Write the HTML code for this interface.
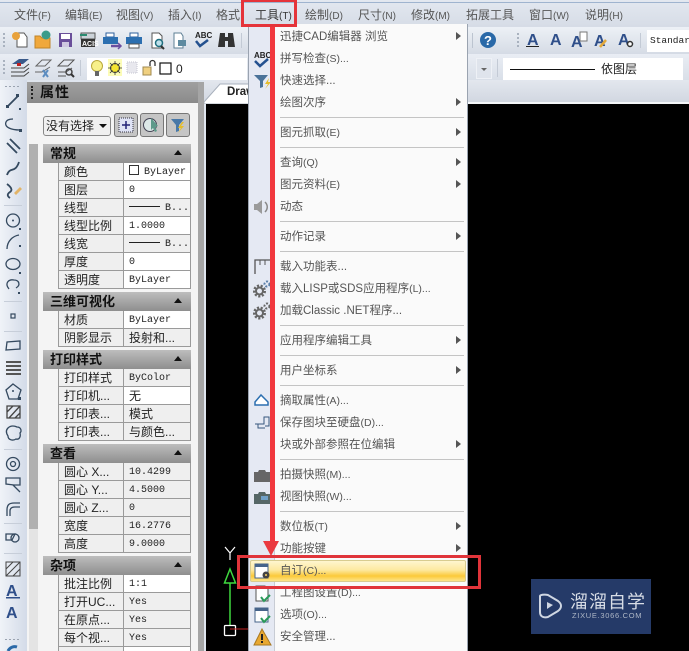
<!DOCTYPE html>
<html><head><meta charset="utf-8">
<style>
html,body{margin:0;padding:0;width:689px;height:651px;overflow:hidden;background:#dfe5ee}
body{position:relative;font-family:"Liberation Sans","Noto Sans CJK SC",sans-serif;font-size:12px;color:#222}
div{position:absolute;box-sizing:border-box;white-space:nowrap}
.m{top:7px;height:16px;line-height:16px;font-size:12px;color:#555}
.m small{font-size:10px}
.i{left:280px;height:16px;line-height:16px;font-size:11.5px;color:#555;margin-top:1px}
.i small{font-size:10.5px}
.s{left:280px;width:184px;height:1px;background:#c4c4c4}
.a{left:456px;width:0;height:0;border-left:5px solid #555;border-top:4.5px solid transparent;border-bottom:4.5px solid transparent}
.h{left:43px;width:148px;height:19px;background:linear-gradient(#bdbdbd,#8e8e8e);font-weight:bold;font-size:13px;line-height:19px;padding-left:7px;color:#111}
.h:after{content:"";position:absolute;right:9px;top:6px;border-bottom:5px solid #111;border-left:4.5px solid transparent;border-right:4.5px solid transparent}
.l,.v{height:18px;line-height:19px;border-bottom:1px solid #9a9a9a;overflow:hidden}
.l{left:58px;width:66px;background:#efefef;border-left:1px solid #9a9a9a;border-right:1px solid #9a9a9a;padding-left:5px;font-size:12px;color:#222}
.v{left:124px;width:67px;background:#fff;border-right:1px solid #9a9a9a;padding-left:5px;font:10px/19px "Liberation Mono","Noto Sans CJK SC",monospace;color:#222}
.g{background:#efefef}
.c{font-family:"Liberation Sans","Noto Sans CJK SC",sans-serif;font-size:12px}
.ln{display:inline-block;width:31px;height:1px;background:#222;vertical-align:3px;margin-right:5px}
</style></head><body>

<!-- menu bar -->
<div style="left:0;top:0;width:689px;height:27px;background:linear-gradient(#e3e8f0,#d6dce6)"></div>
<div style="left:0;top:2px;width:689px;height:1px;background:#9fb4cf"></div>
<div class="m" style="left:14px">文件<small>(F)</small></div>
<div class="m" style="left:65px">编辑<small>(E)</small></div>
<div class="m" style="left:116px">视图<small>(V)</small></div>
<div class="m" style="left:168px">插入<small>(I)</small></div>
<div class="m" style="left:216px">格式</div>
<div class="m" style="left:255px;color:#333">工具<small>(T)</small></div>
<div class="m" style="left:305px">绘制<small>(D)</small></div>
<div class="m" style="left:358px">尺寸<small>(N)</small></div>
<div class="m" style="left:411px">修改<small>(M)</small></div>
<div class="m" style="left:466px">拓展工具</div>
<div class="m" style="left:529px">窗口<small>(W)</small></div>
<div class="m" style="left:585px">说明<small>(H)</small></div>

<!-- toolbars -->
<div style="left:0;top:27px;width:689px;height:27px;background:linear-gradient(#edf1f6,#d5dbe5)"></div>
<div style="left:0;top:54px;width:689px;height:26px;background:linear-gradient(#e9edf4,#d9dfe8)"></div>
<div style="left:87px;top:58px;width:160px;height:22px;background:#fff"></div>
<div style="left:503px;top:58px;width:180px;height:22px;background:#fff"></div>
<div style="left:510px;top:69px;width:85px;height:1px;background:#111"></div>
<div style="left:601px;top:60px;height:18px;line-height:18px;font-size:12px;color:#222">依图层</div>
<div style="left:476px;top:58px;width:16px;height:21px;background:#dfe4ec;border:1px solid #eef1f6"></div>
<div style="left:481px;top:68px;border-top:3px solid #666;border-left:3px solid transparent;border-right:3px solid transparent"></div>
<div style="left:647px;top:30px;width:42px;height:22px;background:#fff;font:9.5px/22px 'Liberation Mono',monospace;padding-left:3px;color:#222;overflow:hidden">Standard</div>
<div style="left:176px;top:60px;height:18px;line-height:18px;font-size:12px;color:#222">0</div>

<svg style="position:absolute;left:0;top:0" width="689" height="104" viewBox="0 0 689 104">
 <g fill="#a9b2bf">
  <rect x="3" y="33" width="2" height="2"/><rect x="3" y="37" width="2" height="2"/><rect x="3" y="41" width="2" height="2"/><rect x="3" y="45" width="2" height="2"/>
  <rect x="3" y="60" width="2" height="2"/><rect x="3" y="64" width="2" height="2"/><rect x="3" y="68" width="2" height="2"/><rect x="3" y="72" width="2" height="2"/>
  <rect x="517" y="33" width="2" height="2"/><rect x="517" y="37" width="2" height="2"/><rect x="517" y="41" width="2" height="2"/><rect x="517" y="45" width="2" height="2"/>
 </g>
 <!-- new -->
 <path d="M17 33h7l3 4v10H17z" fill="#fff" stroke="#555"/><circle cx="16" cy="36" r="4" fill="#e8a23c"/>
 <!-- open -->
 <path d="M35 36h5l2 2h8v10H35z" fill="#f0a83c" stroke="#c08428"/><circle cx="46" cy="35" r="4.500" fill="#3b9c8a"/>
 <!-- save -->
 <path d="M59 33h13v14H59z" fill="#6a4f9a"/><rect x="61" y="34" width="9" height="5" fill="#fff"/><rect x="62" y="42" width="7" height="5" fill="#cfc8e0"/>
 <!-- acis -->
 <rect x="81" y="33" width="14" height="6" fill="#cbd2d8" stroke="#555"/><rect x="81" y="39" width="14" height="8" fill="#333"/><path d="M80 35h7" stroke="#2a8a70" stroke-width="2"/>
 <text x="82" y="46" font-family="Liberation Sans" font-size="7" font-weight="bold" fill="#fff">ACIS</text>
 <!-- print preview -->
 <rect x="106" y="33" width="8" height="4" fill="#fff" stroke="#2c5f9c"/><rect x="103" y="37" width="15" height="7" fill="#2c6fb0"/><path d="M111 46h9" stroke="#6a4fa0" stroke-width="2.500"/><path d="M118 43l3 3-3 3" fill="none" stroke="#6a4fa0" stroke-width="1.500"/>
 <!-- print -->
 <rect x="130" y="33" width="8" height="4" fill="#fff" stroke="#2c5f9c"/><rect x="126" y="37" width="16" height="7" fill="#2c6fb0"/><rect x="129" y="44" width="10" height="4" fill="#fff" stroke="#555"/>
 <!-- preview doc -->
 <path d="M152 33h7l3 3v12h-10z" fill="#fff" stroke="#555"/><circle cx="159" cy="43" r="3.500" fill="#bfe0ea" stroke="#1f6f80" stroke-width="1.500"/><path d="M161 46l3 3" stroke="#333" stroke-width="2"/>
 <!-- page setup -->
 <path d="M174 33h7l2 3v12h-9z" fill="#fff" stroke="#5e7f94"/><rect x="178" y="40" width="8" height="6" fill="#5e8aa0"/>
 <!-- ABC -->
 <text x="195" y="38" font-family="Liberation Sans" font-size="8" font-weight="bold" fill="#222">ABC</text>
 <path d="M196 41l4 5 8-6" fill="none" stroke="#24518f" stroke-width="2.500"/>
 <!-- binoculars -->
 <path d="M220 33h5v4h3v-4h5l2 14h-7v-6h-3v6h-7z" fill="#333"/>
 <rect x="241" y="33" width="1" height="15" fill="#c3cad5"/>
 <rect x="472" y="33" width="1" height="15" fill="#bcc4d0"/>
 <!-- help -->
 <circle cx="488" cy="40" r="8" fill="#2a69a8"/>
 <text x="484" y="45" font-family="Liberation Sans" font-size="13" font-weight="bold" fill="#fff">?</text>
 <!-- text styles -->
 <g font-family="Liberation Sans" font-weight="bold" font-size="16" fill="#2f4f8a">
  <text x="527" y="45">A</text><rect x="526" y="46" width="13" height="1" fill="#222"/>
  <text x="550" y="45">A</text><text x="571" y="47">A</text><text x="594" y="46">A</text><text x="618" y="45">A</text>
 </g>
 <path d="M580 32h7v9h-7z" fill="#fff" stroke="#777"/>
 <path d="M600 47l6-7" stroke="#e2a83a" stroke-width="2.500"/>
 <circle cx="630" cy="44" r="2.500" fill="#fff" stroke="#333" stroke-width="1.500"/>
 <rect x="640" y="33" width="1" height="15" fill="#c3cad5"/>
 <rect x="497" y="59" width="1" height="18" fill="#c3cad5"/>
 <!-- layer tools -->
 <path d="M12 64l7-5h10l-6 5z" fill="#3a5a8a"/><path d="M11 68h13l5-4M11 72h13l5-4M11 76h13l5-4" fill="none" stroke="#444"/><rect x="17" y="63" width="4" height="3" fill="#c02020"/>
 <path d="M36 66l6-6h9l-6 6zM35 72h7l8-5" fill="none" stroke="#666"/><path d="M43 70l5 7M48 70l-5 7" stroke="#5c8dc0" stroke-width="2"/>
 <path d="M58 66l6-6h10l-6 6zM58 72h8l6-4M58 76h8" fill="none" stroke="#555"/><circle cx="69" cy="72" r="3" fill="none" stroke="#444" stroke-width="1.500"/><path d="M71 74l3 3" stroke="#333" stroke-width="2"/>
 <rect x="80" y="60" width="1" height="16" fill="#c3cad5"/>
 <!-- bulb etc -->
 <circle cx="97" cy="66" r="5.500" fill="#f7f08a" stroke="#b9a83a"/><rect x="95" y="71" width="4" height="5" fill="#666"/>
 <rect x="108" y="59" width="14" height="17" fill="#fbfb9a" opacity=".7"/><circle cx="115" cy="68" r="4.500" fill="#f5e530" stroke="#333"/>
 <path d="M115 61v14M108 68h14M110 63l10 10M120 63l-10 10" stroke="#333" stroke-width=".8"/><circle cx="115" cy="68" r="3.500" fill="#f5e530"/>
 <rect x="127" y="62" width="10" height="11" fill="#e8e8ee" stroke="#c6c6d2" stroke-dasharray="1 1"/>
 <rect x="143" y="67" width="8" height="8" fill="#f0d080" stroke="#a08a50"/><path d="M150 66v-3a2.500 2.500 0 0 1 5 0v3" fill="none" stroke="#333" stroke-width="1.300"/>
 <rect x="160" y="63" width="11" height="11" fill="#fff" stroke="#111" stroke-width="1.200"/>
</svg>

<!-- left toolbar -->
<div style="left:0;top:80px;width:27px;height:571px;background:linear-gradient(90deg,#f0f3f8,#d3dbe8)"></div>
<svg style="position:absolute;left:0;top:80px" width="28" height="571" viewBox="0 80 28 571">
 <g fill="#9aa3b0"><rect x="5" y="86" width="2" height="1"/><rect x="9" y="86" width="2" height="1"/><rect x="13" y="86" width="2" height="1"/><rect x="17" y="86" width="2" height="1"/><rect x="5" y="639" width="2" height="1"/><rect x="9" y="639" width="2" height="1"/><rect x="13" y="639" width="2" height="1"/><rect x="17" y="639" width="2" height="1"/></g>
 <g fill="none" stroke="#34495f" stroke-width="1.300">
  <path d="M7 107L18 96" stroke-width="1.800"/>
  <path d="M13 119c-9 0-9 7-4 9 2 1 6 2 11 2"/>
  <path d="M7 143l10 10M10 139l10 10" stroke-width="1.800"/>
  <path d="M7 175c3-9 8-1 12-13" stroke-width="1.800"/>
  <path d="M7 184c4 3 6 6 3 8s-3 4 0 6" stroke-width="1.800"/>
  <circle cx="13" cy="220.500" r="6.500"/>
  <path d="M7 249c0-8 6-13 12-14"/>
  <ellipse cx="13" cy="264" rx="7" ry="5.500"/>
  <path d="M9 289c-5-6 0-10 5-9 5 0 7 5 2 8"/>
  <rect x="11" y="314" width="4" height="4" stroke-width="1.200"/>
  <path d="M6 350l14-1v-8l-13 1z"/>
  <path d="M6 362h15M6 366h15M6 370h15M6 374h15" stroke="#555" stroke-width="2"/>
  <path d="M13 384l8 6-3 9H9l-3-9z"/>
  <path d="M7 418v-12h13v12zM7 412l6-6M9 418l11-12M15 418l5-5" stroke="#444"/>
  <path d="M8 428c3-3 7-2 9-1 4 0 5 4 3 6 1 4-1 7-4 6-3 2-8 1-8-3-2-3-2-6 0-8z"/>
  <circle cx="13" cy="464" r="6.500"/><circle cx="13" cy="464" r="2.500"/>
  <path d="M6 478h14v7h-6l-8-1zM13 485l7 7"/>
  <path d="M7 516v-6c0-5 2-7 7-7h6M10 516v-5c0-3 2-4 5-4h5" stroke-width="1.300"/>
  <path d="M6 534h9l-3 6H6z"/><circle cx="15" cy="538" r="4"/>
 </g>
 <g fill="#34495f">
  <rect x="6" y="105" width="3" height="3"/><rect x="16" y="94" width="3" height="3"/><rect x="19" y="108" width="2" height="2"/>
  <rect x="19" y="129" width="3" height="3"/><rect x="19" y="245" width="2" height="2"/><rect x="19" y="272" width="2" height="2"/><rect x="18" y="292" width="2" height="2"/><rect x="19" y="228" width="2" height="2"/><rect x="18" y="397" width="3" height="3"/>
 </g>
 <path d="M14 193l6-6 2 2-6 6z" fill="#e2b468"/>
 <circle cx="13" cy="391" r="1" fill="#34495f"/>
 <circle cx="13" cy="220.500" r="1" fill="#34495f"/>
 <g fill="#c7ced9">
  <rect x="4" y="205" width="18" height="1"/><rect x="4" y="301" width="18" height="1"/><rect x="4" y="331" width="18" height="1"/><rect x="4" y="449" width="18" height="1"/><rect x="4" y="523" width="18" height="1"/><rect x="4" y="553" width="18" height="1"/>
 </g>
 <g font-family="Liberation Sans" font-weight="bold" font-size="16" fill="#2f4f8a">
  <text x="6" y="596">A</text><text x="6" y="618">A</text>
 </g>
 <rect x="6" y="597" width="14" height="1.500" fill="#2f4f8a"/>
 <path d="M6 576v-14h14v14zM6 569l7-7M6 576l14-14M13 576l7-7" fill="none" stroke="#444"/>
 <path d="M8 651c2-4 6-5 9-4" fill="none" stroke="#2a69a8" stroke-width="3"/>
</svg>

<!-- property panel -->
<div style="left:27px;top:82px;width:177px;height:569px;background:#f4f4f4"></div>
<div style="left:27px;top:82px;width:171px;height:21px;background:linear-gradient(#a0a0a0,#8a8a8a);"></div>
<div style="left:198px;top:82px;width:6px;height:569px;background:#a5a5a5"></div>
<div style="left:31px;top:86px;width:2px;height:13px;border-left:2px dotted #222"></div>
<div style="left:40px;top:82px;height:21px;line-height:21px;font-size:14px;font-weight:bold;color:#111;letter-spacing:1px">属性</div>
<div style="left:29px;top:144px;width:9px;height:507px;background:#e4e4e4"></div>
<div style="left:29px;top:144px;width:9px;height:385px;background:#b0b0b0"></div>
<div style="left:43px;top:116px;width:68px;height:20px;border:1px solid #888;border-radius:3px;background:#f0f0f0;line-height:18px;padding-left:2px;font-size:12px;color:#222;overflow:hidden">没有选择</div>
<div style="left:96px;top:117px;width:14px;height:18px;background:#f0f0f0;border-radius:0 3px 3px 0"></div>
<div style="left:99px;top:124px;border-top:4px solid #111;border-left:4px solid transparent;border-right:4px solid transparent"></div>
<div style="left:114px;top:113px;width:24px;height:24px;background:#c5c5c5;border:1px solid #777;border-radius:3px"></div>
<div style="left:140px;top:113px;width:24px;height:24px;background:#c5c5c5;border:1px solid #777;border-radius:3px"></div>
<div style="left:166px;top:113px;width:24px;height:24px;background:#c5c5c5;border:1px solid #777;border-radius:3px"></div>
<svg style="position:absolute;left:114px;top:113px" width="76" height="24" viewBox="0 0 76 24">
 <rect x="5" y="5" width="14" height="14" fill="#dfe3f5" stroke="#334" stroke-dasharray="1 1"/><path d="M12 8v8M8 12h8" stroke="#227" stroke-width="1.500"/>
 <circle cx="36" cy="12" r="6.500" fill="#dce8e8" stroke="#445" /><path d="M37 5l7 8-3 1 2 4-2 1-2-4-2 2z" fill="#5d9a8a"/>
 <path d="M57 6h13l-5 6v6l-3 1v-7z" fill="#4878a8"/><path d="M68 9l-4 6h3l-3 5 6-7h-3l3-4z" fill="#e6bd2a"/>
</svg>

<div class="h" style="top:144px">常规</div>
<div class="l" style="top:163px">颜色</div><div class="v" style="top:163px"><span style="display:inline-block;width:10px;height:10px;border:1px solid #333;box-sizing:border-box;vertical-align:-1px;margin-right:5px"></span>ByLayer</div>
<div class="l" style="top:181px">图层</div><div class="v" style="top:181px">0</div>
<div class="l" style="top:199px">线型</div><div class="v g" style="top:199px"><span class="ln"></span>B...</div>
<div class="l" style="top:217px">线型比例</div><div class="v" style="top:217px">1.0000</div>
<div class="l" style="top:235px">线宽</div><div class="v g" style="top:235px"><span class="ln"></span>B...</div>
<div class="l" style="top:253px">厚度</div><div class="v" style="top:253px">0</div>
<div class="l" style="top:271px">透明度</div><div class="v" style="top:271px">ByLayer</div>

<div class="h" style="top:292px">三维可视化</div>
<div class="l" style="top:311px">材质</div><div class="v" style="top:311px">ByLayer</div>
<div class="l" style="top:329px">阴影显示</div><div class="v g c" style="top:329px">投射和...</div>

<div class="h" style="top:350px">打印样式</div>
<div class="l" style="top:369px">打印样式</div><div class="v g" style="top:369px">ByColor</div>
<div class="l" style="top:387px">打印机...</div><div class="v c" style="top:387px">无</div>
<div class="l" style="top:405px">打印表...</div><div class="v g c" style="top:405px">模式</div>
<div class="l" style="top:423px">打印表...</div><div class="v g c" style="top:423px">与颜色...</div>

<div class="h" style="top:444px">查看</div>
<div class="l" style="top:463px">圆心 X...</div><div class="v g" style="top:463px">10.4299</div>
<div class="l" style="top:481px">圆心 Y...</div><div class="v g" style="top:481px">4.5000</div>
<div class="l" style="top:499px">圆心 Z...</div><div class="v g" style="top:499px">0</div>
<div class="l" style="top:517px">宽度</div><div class="v g" style="top:517px">16.2776</div>
<div class="l" style="top:535px">高度</div><div class="v g" style="top:535px">9.0000</div>

<div class="h" style="top:556px">杂项</div>
<div class="l" style="top:575px">批注比例</div><div class="v" style="top:575px">1:1</div>
<div class="l" style="top:593px">打开UC...</div><div class="v g" style="top:593px">Yes</div>
<div class="l" style="top:611px">在原点...</div><div class="v g" style="top:611px">Yes</div>
<div class="l" style="top:629px">每个视...</div><div class="v g" style="top:629px">Yes</div>
<div class="l" style="top:647px"></div><div class="v" style="top:647px"></div>

<!-- drawing area -->
<div style="left:204px;top:80px;width:485px;height:24px;background:linear-gradient(#e3e7ee,#d0d6e0)"></div>
<div style="left:204px;top:102px;width:485px;height:2px;background:#f4f6f9"></div>
<svg style="position:absolute;left:204px;top:80px" width="50" height="24"><path d="M0 22L16 4H50V24H0z" fill="#fff" stroke="#a8b0bc"/></svg>
<div style="left:227px;top:85px;height:14px;line-height:14px;font-size:11.5px;font-weight:bold;color:#222">Draw</div>
<div style="left:206px;top:104px;width:483px;height:547px;background:#000"></div>

<!-- UCS -->
<svg style="position:absolute;left:206px;top:540px" width="60" height="111" viewBox="206 540 60 111">
 <path d="M225 547l5 6 5-6M230 553v7" fill="none" stroke="#fff" stroke-width="1.200"/>
 <path d="M230 569l-5.500 14h11z" fill="none" stroke="#3fd93f" stroke-width="1.500"/>
 <path d="M230 583v42" stroke="#3fd93f" stroke-width="1.500"/>
 <rect x="224.500" y="625.500" width="11" height="10" rx="1" fill="none" stroke="#fff" stroke-width="1.300"/>
 <path d="M230 629h20" stroke="#c02020" stroke-width="1"/>
</svg>

<!-- dropdown menu -->
<div style="left:248px;top:24px;width:220px;height:627px;background:#fafafa;border-left:1px solid #9aa3b0;border-right:1px solid #9aa3b0"></div>
<div style="left:249px;top:24px;width:26px;height:627px;background:#e5e9f3;border-right:1px solid #c8ccd4"></div>
<div class="i" style="top:28px">迅捷CAD编辑器 浏览</div>
<div class="i" style="top:50px">拼写检查<small>(S)...</small></div>
<div class="i" style="top:72px">快速选择...</div>
<div class="i" style="top:94px">绘图次序</div>
<div class="s" style="top:117px"></div>
<div class="i" style="top:124px">图元抓取<small>(E)</small></div>
<div class="s" style="top:147px"></div>
<div class="i" style="top:154px">查询<small>(Q)</small></div>
<div class="i" style="top:176px">图元资料<small>(E)</small></div>
<div class="i" style="top:198px">动态</div>
<div class="s" style="top:221px"></div>
<div class="i" style="top:228px">动作记录</div>
<div class="s" style="top:251px"></div>
<div class="i" style="top:258px">载入功能表...</div>
<div class="i" style="top:280px">载入LISP或SDS应用程序<small>(L)...</small></div>
<div class="i" style="top:302px">加载Classic .NET程序...</div>
<div class="s" style="top:325px"></div>
<div class="i" style="top:332px">应用程序编辑工具</div>
<div class="s" style="top:355px"></div>
<div class="i" style="top:362px">用户坐标系</div>
<div class="s" style="top:385px"></div>
<div class="i" style="top:392px">摘取属性<small>(A)...</small></div>
<div class="i" style="top:414px">保存图块至硬盘<small>(D)...</small></div>
<div class="i" style="top:436px">块或外部参照在位编辑</div>
<div class="s" style="top:459px"></div>
<div class="i" style="top:466px">拍摄快照<small>(M)...</small></div>
<div class="i" style="top:488px">视图快照<small>(W)...</small></div>
<div class="s" style="top:511px"></div>
<div class="i" style="top:518px">数位板<small>(T)</small></div>
<div class="i" style="top:540px">功能按键</div>
<div style="left:250px;top:560px;width:216px;height:22px;border:1px solid #d8cc90;border-radius:2px;background:linear-gradient(#fff6d0,#fde9a0 45%,#fbc93a 75%,#fde58a)"></div>
<div class="i" style="top:562px">自订<small>(C)...</small></div>
<div class="i" style="top:584px">工程图设置<small>(D)...</small></div>
<div class="i" style="top:606px">选项<small>(O)...</small></div>
<div class="i" style="top:628px">安全管理...</div>
<div class="a" style="top:32px"></div><div class="a" style="top:98px"></div><div class="a" style="top:128px"></div><div class="a" style="top:158px"></div><div class="a" style="top:180px"></div><div class="a" style="top:232px"></div><div class="a" style="top:336px"></div><div class="a" style="top:366px"></div><div class="a" style="top:440px"></div><div class="a" style="top:522px"></div><div class="a" style="top:544px"></div>

<!-- menu icons -->
<svg style="position:absolute;left:249px;top:24px" width="26" height="627" viewBox="249 24 26 627">
 <text x="254" y="58" font-family="Liberation Sans" font-size="8" font-weight="bold" fill="#222">ABC</text>
 <path d="M255 61l5 5 8-7" fill="none" stroke="#24518f" stroke-width="2.500"/>
 <path d="M254 75h14l-5 6v6l-3 1v-7z" fill="#4a7298"/><path d="M269 78l-4 6h3l-3 5 6-7h-3z" fill="#e6bd2a"/>
 <path d="M254 204h3l5-4v14l-5-4h-3z" fill="#9a9a9a"/><path d="M265 202c3 3 3 7 0 10" fill="none" stroke="#888" stroke-width="1.500"/>
 <path d="M255 274v-14h15" fill="none" stroke="#555" stroke-width="1.300"/><path d="M260 260v5M265 260v5" stroke="#555"/>
 <g fill="none" stroke-dasharray="2 1.500">
  <circle cx="259.500" cy="291" r="5" stroke="#666" stroke-width="3"/><circle cx="267" cy="284" r="2.500" stroke="#5b7fa8" stroke-width="2"/>
  <circle cx="259.500" cy="313" r="5" stroke="#666" stroke-width="3"/><circle cx="267" cy="306" r="2.500" stroke="#666" stroke-width="2"/>
 </g>
 <circle cx="259.500" cy="291" r="3.500" fill="none" stroke="#666" stroke-width="2"/><circle cx="259.500" cy="313" r="3.500" fill="none" stroke="#666" stroke-width="2"/>
 <path d="M255 402l6-7 7 7v3h-13z" fill="#fff" stroke="#2c6fb0" stroke-width="1.500"/>
 <path d="M255 424h9v-7h5v9h-4M258 424v4h7" fill="none" stroke="#38587e"/>
 <path d="M254 472h4l1-2h6l1 2h4v10h-16z" fill="#666"/>
 <path d="M254 494h4l1-2h6l1 2h4v10h-16z" fill="#566"/><rect x="261" y="496" width="7" height="4" fill="#6fa0c8"/>
 <rect x="255" y="564" width="13" height="14" fill="#fff" stroke="#46648a"/><rect x="255" y="564" width="13" height="3" fill="#46648a"/>
 <circle cx="266" cy="575" r="3.500" fill="#444"/><circle cx="266" cy="575" r="1" fill="#fbd36a"/>
 <path d="M256 586h9l3 3v12h-12z" fill="#fff" stroke="#555"/><path d="M261 597l3 4 6-6" fill="none" stroke="#2b9a5a" stroke-width="2"/>
 <rect x="255" y="608" width="13" height="14" fill="#fff" stroke="#46648a"/><rect x="255" y="608" width="13" height="3" fill="#46648a"/><path d="M261 618l3 4 6-6" fill="none" stroke="#2b9a5a" stroke-width="2"/>
 <path d="M262 629l9 16h-17z" fill="#e8a832" stroke="#a87820"/><rect x="261" y="634" width="2" height="6" fill="#222"/><rect x="261" y="641" width="2" height="2" fill="#222"/>
</svg>

<!-- annotations -->
<div style="left:241px;top:-1px;width:56px;height:28px;border:3px solid #e5343a"></div>
<div style="left:270px;top:27px;width:5px;height:516px;background:#f1383e"></div>
<svg style="position:absolute;left:263px;top:541px" width="16" height="15"><path d="M0 0h16L8 15z" fill="#ea3a40"/></svg>
<div style="left:237px;top:555px;width:244px;height:34px;border:3.500px solid #e0343a"></div>

<!-- watermark -->
<div style="left:531px;top:579px;width:120px;height:55px;background:#253a68"></div>
<svg style="position:absolute;left:531px;top:579px" width="120" height="55" viewBox="531 579 120 55">
 <path d="M540 596v16c0 5 4 6 8 5l10-6c4-3 4-7 0-10l-10-6c-4-1-8 0-8 1z" fill="none" stroke="#cfd6e2" stroke-width="2"/>
 <path d="M547 602l6 3-6 4z" fill="#cfd6e2"/>
</svg>
<div style="left:570px;top:591px;height:22px;line-height:22px;font-size:18px;color:#d8dde6;letter-spacing:1px">溜溜自学</div>
<div style="left:572px;top:610px;height:12px;line-height:12px;font-size:7.500px;color:#aeb7c6;letter-spacing:.7px">ZIXUE.3066.COM</div>
</body></html>
